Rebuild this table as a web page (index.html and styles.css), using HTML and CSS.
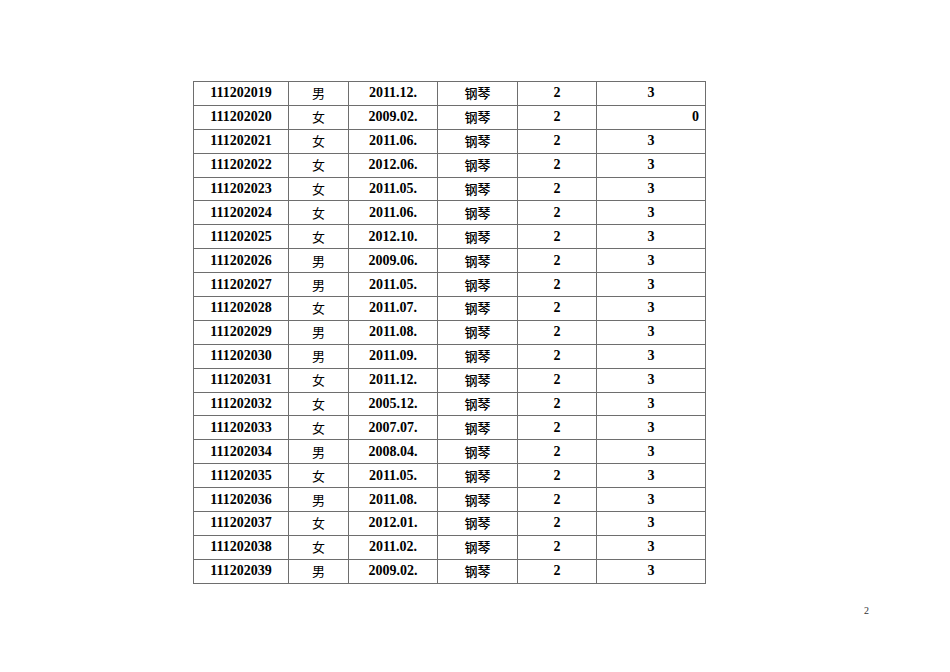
FILE: index.html
```html
<!DOCTYPE html>
<html lang="zh">
<head>
<meta charset="utf-8">
<link rel="stylesheet" href="styles.css">
</head>
<body>
<div class="page">
<table class="grid">
<colgroup><col class="c1"><col class="c2"><col class="c3"><col class="c4"><col class="c5"><col class="c6"></colgroup>
<tbody>
<tr><td>111202019</td><td class="cjk">男</td><td>2011.12.</td><td class="cjk inst">钢琴</td><td>2</td><td>3</td></tr>
<tr><td>111202020</td><td class="cjk">女</td><td>2009.02.</td><td class="cjk inst">钢琴</td><td>2</td><td class="right">0</td></tr>
<tr><td>111202021</td><td class="cjk">女</td><td>2011.06.</td><td class="cjk inst">钢琴</td><td>2</td><td>3</td></tr>
<tr><td>111202022</td><td class="cjk">女</td><td>2012.06.</td><td class="cjk inst">钢琴</td><td>2</td><td>3</td></tr>
<tr><td>111202023</td><td class="cjk">女</td><td>2011.05.</td><td class="cjk inst">钢琴</td><td>2</td><td>3</td></tr>
<tr><td>111202024</td><td class="cjk">女</td><td>2011.06.</td><td class="cjk inst">钢琴</td><td>2</td><td>3</td></tr>
<tr><td>111202025</td><td class="cjk">女</td><td>2012.10.</td><td class="cjk inst">钢琴</td><td>2</td><td>3</td></tr>
<tr><td>111202026</td><td class="cjk">男</td><td>2009.06.</td><td class="cjk inst">钢琴</td><td>2</td><td>3</td></tr>
<tr><td>111202027</td><td class="cjk">男</td><td>2011.05.</td><td class="cjk inst">钢琴</td><td>2</td><td>3</td></tr>
<tr><td>111202028</td><td class="cjk">女</td><td>2011.07.</td><td class="cjk inst">钢琴</td><td>2</td><td>3</td></tr>
<tr><td>111202029</td><td class="cjk">男</td><td>2011.08.</td><td class="cjk inst">钢琴</td><td>2</td><td>3</td></tr>
<tr><td>111202030</td><td class="cjk">男</td><td>2011.09.</td><td class="cjk inst">钢琴</td><td>2</td><td>3</td></tr>
<tr><td>111202031</td><td class="cjk">女</td><td>2011.12.</td><td class="cjk inst">钢琴</td><td>2</td><td>3</td></tr>
<tr><td>111202032</td><td class="cjk">女</td><td>2005.12.</td><td class="cjk inst">钢琴</td><td>2</td><td>3</td></tr>
<tr><td>111202033</td><td class="cjk">女</td><td>2007.07.</td><td class="cjk inst">钢琴</td><td>2</td><td>3</td></tr>
<tr><td>111202034</td><td class="cjk">男</td><td>2008.04.</td><td class="cjk inst">钢琴</td><td>2</td><td>3</td></tr>
<tr><td>111202035</td><td class="cjk">女</td><td>2011.05.</td><td class="cjk inst">钢琴</td><td>2</td><td>3</td></tr>
<tr><td>111202036</td><td class="cjk">男</td><td>2011.08.</td><td class="cjk inst">钢琴</td><td>2</td><td>3</td></tr>
<tr><td>111202037</td><td class="cjk">女</td><td>2012.01.</td><td class="cjk inst">钢琴</td><td>2</td><td>3</td></tr>
<tr><td>111202038</td><td class="cjk">女</td><td>2011.02.</td><td class="cjk inst">钢琴</td><td>2</td><td>3</td></tr>
<tr><td>111202039</td><td class="cjk">男</td><td>2009.02.</td><td class="cjk inst">钢琴</td><td>2</td><td>3</td></tr>
</tbody>
</table>
<div class="footer"><span class="pagenum">2</span></div>
</div>
</body>
</html>
```
FILE: styles.css
```css
html, body {
  margin: 0;
  padding: 0;
  background: #ffffff;
}
.page {
  width: 950px;
  height: 672px;
  box-sizing: border-box;
  padding: 81px 0 0 193px;
  font-family: "Liberation Serif", "Noto Sans CJK SC", serif;
  color: #000;
}
.grid {
  border-collapse: collapse;
  table-layout: fixed;
  width: 513px;
}
.c1 { width: 95px; }
.c2 { width: 60px; }
.c3 { width: 89px; }
.c4 { width: 80px; }
.c5 { width: 79px; }
.c6 { width: 109px; }
.grid td {
  border: 1px solid #6e6e6e;
  height: 22.9px;
  padding: 0 6px;
  text-align: center;
  vertical-align: middle;
  font-weight: bold;
  font-size: 14px;
  line-height: 16px;
  white-space: nowrap;
}
.grid td.cjk {
  font-family: "Noto Sans CJK SC", sans-serif;
  font-weight: normal;
  font-size: 13px;
}
.grid td.inst {
  font-weight: 500;
}
.grid td.right {
  text-align: right;
}
.footer {
  width: 676px;
  padding-top: 21px;
  display: flex;
  justify-content: flex-end;
}
.pagenum {
  font-size: 10px;
  color: #333;
}
```
